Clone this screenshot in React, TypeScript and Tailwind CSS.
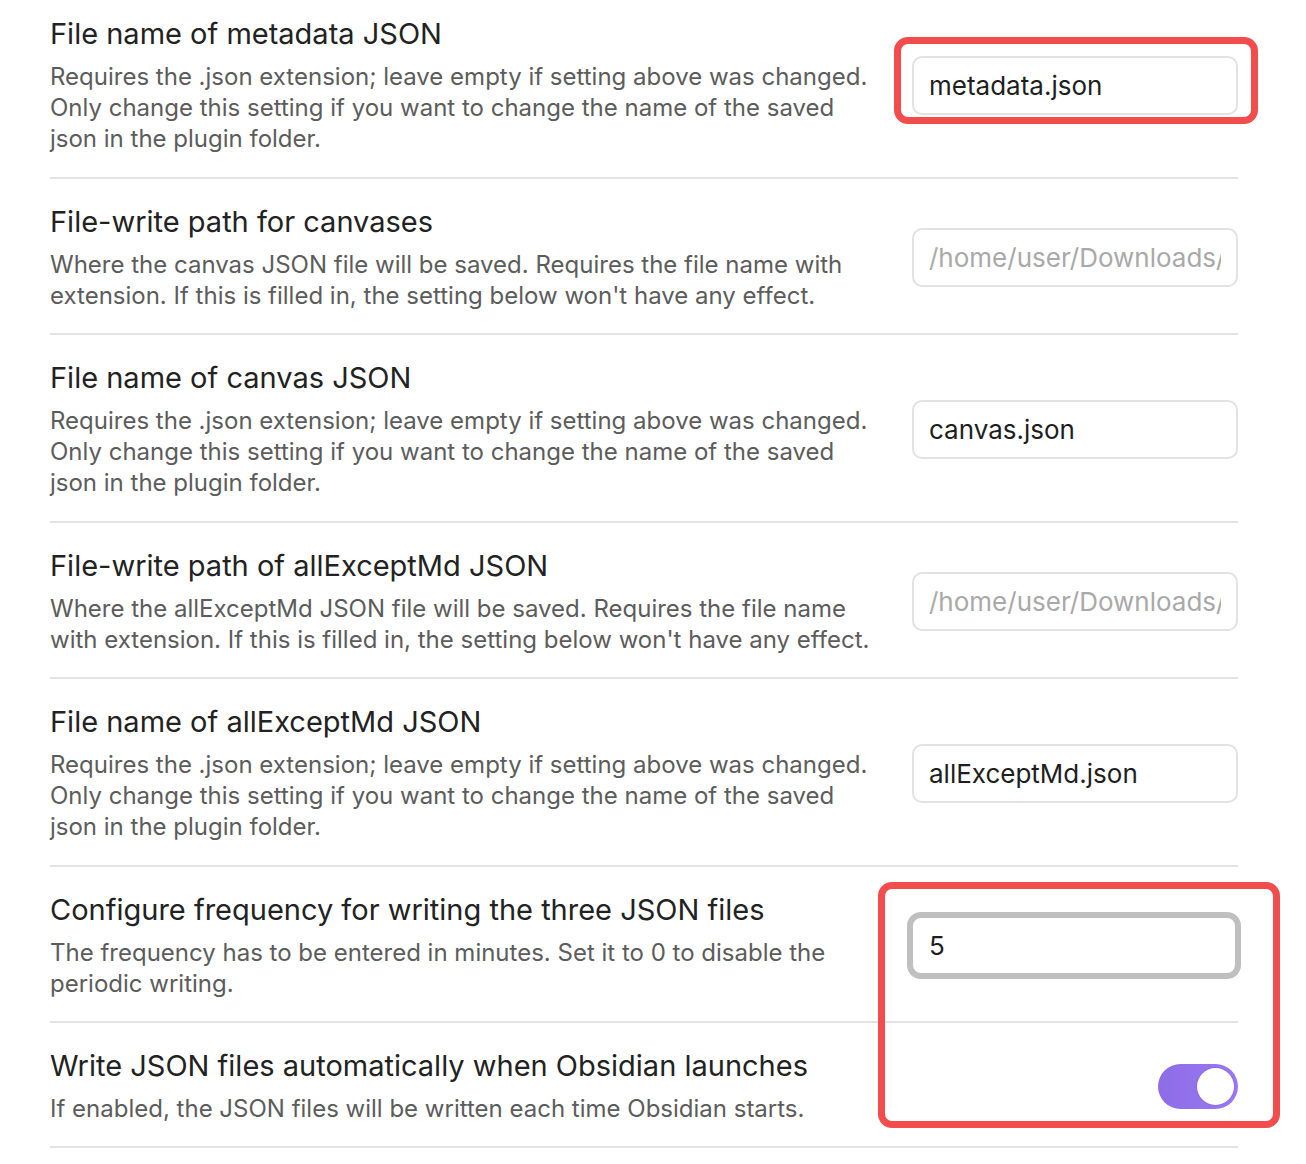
import React from 'react';

interface SettingRow {
  title: string;
  desc: string;
  control: React.ReactNode;
}

function TextBox({ value, placeholder }: { value?: string; placeholder?: string }) {
  return (
    <input
      readOnly
      value={value ?? ''}
      placeholder={placeholder}
      className="w-[326px] h-[59px] rounded-[10px] border-2 border-[#e2e2e2] bg-white px-[15px] text-[26px] text-[#1e1e1e] placeholder:text-[#a9a9a9] outline-none font-['Inter',sans-serif]"
    />
  );
}

function FocusedBox({ value }: { value: string }) {
  return (
    <input
      readOnly
      value={value}
      className="-mr-[3px] w-[334px] h-[67px] rounded-[14px] border-[6px] border-[#bfbfbf] bg-white pl-[16px] text-[26px] text-[#1e1e1e] outline-none font-['Inter',sans-serif]"
    />
  );
}

function Toggle() {
  return (
    <div className="flex h-[45px] w-[80px] items-center justify-end rounded-full bg-gradient-to-r from-[#8d6de6] to-[#9a78f4] pr-[4px]">
      <div className="h-[37px] w-[37px] rounded-full bg-white shadow-[0_0_0_1px_rgba(0,0,0,0.06)]" />
    </div>
  );
}

const rows: SettingRow[] = [
  {
    title: 'File name of metadata JSON',
    desc: 'Requires the .json extension; leave empty if setting above was changed. Only change this setting if you want to change the name of the saved json in the plugin folder.',
    control: <TextBox value="metadata.json" />,
  },
  {
    title: 'File-write path for canvases',
    desc: "Where the canvas JSON file will be saved. Requires the file name with extension. If this is filled in, the setting below won't have any effect.",
    control: <TextBox placeholder="/home/user/Downloads/canvas.json" />,
  },
  {
    title: 'File name of canvas JSON',
    desc: 'Requires the .json extension; leave empty if setting above was changed. Only change this setting if you want to change the name of the saved json in the plugin folder.',
    control: <TextBox value="canvas.json" />,
  },
  {
    title: 'File-write path of allExceptMd JSON',
    desc: "Where the allExceptMd JSON file will be saved. Requires the file name with extension. If this is filled in, the setting below won't have any effect.",
    control: <TextBox placeholder="/home/user/Downloads/allExceptMd.json" />,
  },
  {
    title: 'File name of allExceptMd JSON',
    desc: 'Requires the .json extension; leave empty if setting above was changed. Only change this setting if you want to change the name of the saved json in the plugin folder.',
    control: <TextBox value="allExceptMd.json" />,
  },
  {
    title: 'Configure frequency for writing the three JSON files',
    desc: 'The frequency has to be entered in minutes. Set it to 0 to disable the periodic writing.',
    control: <FocusedBox value="5" />,
  },
  {
    title: 'Write JSON files automatically when Obsidian launches',
    desc: 'If enabled, the JSON files will be written each time Obsidian starts.',
    control: <Toggle />,
  },
];

export default function App() {
  return (
    <div className="relative h-[1164px] w-[1306px] overflow-hidden bg-white font-['Inter',sans-serif]">
      <div className="ml-[50px] -mt-[9px] w-[1188px]">
        {rows.map((row) => (
          <div key={row.title} className="flex items-center border-b-2 border-[#e3e3e3] pt-[25px] pb-[22px]">
            <div className="w-[830px] shrink-0">
              <div className="text-[29px] leading-[36px] text-[#222222]">{row.title}</div>
              <div className="mt-[9px] text-[24px] leading-[31.2px] text-[#5c5c5c]">{row.desc}</div>
            </div>
            <div className="flex flex-1 justify-end">{row.control}</div>
          </div>
        ))}
      </div>

      {/* annotation boxes */}
      <div className="absolute left-[894px] top-[37px] h-[87px] w-[364px] rounded-[14px] border-[7px] border-[#f24c4c]" />
      <div className="absolute left-[878px] top-[882px] h-[246px] w-[402px] rounded-[14px] border-[7px] border-[#f24c4c]" />
    </div>
  );
}
